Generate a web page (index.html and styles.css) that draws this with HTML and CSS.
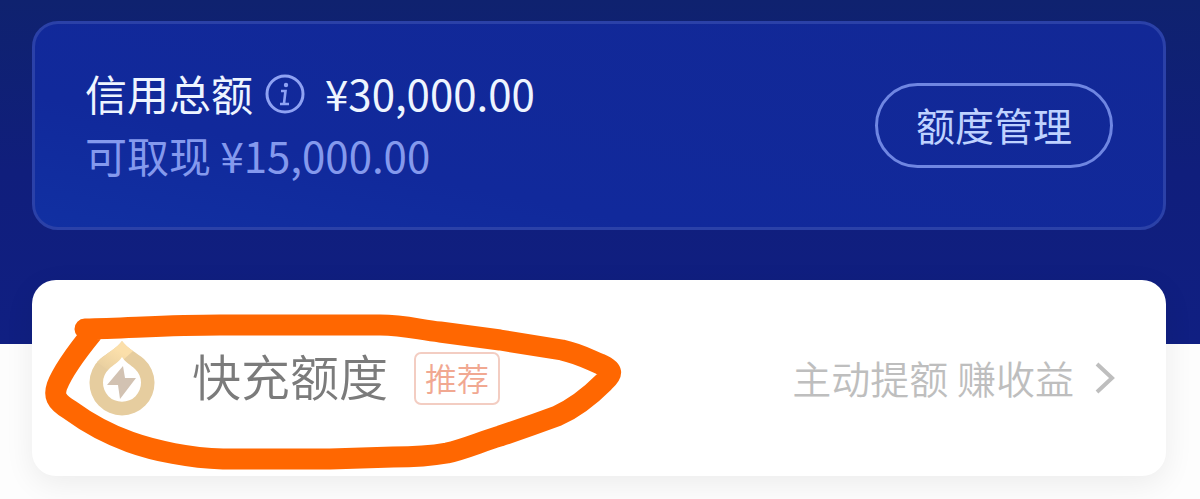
FILE: index.html
```
<!DOCTYPE html>
<html lang="zh-CN">
<head>
<meta charset="utf-8">
<meta name="viewport" content="width=device-width, initial-scale=1">
<title>信用总额</title>
<link rel="stylesheet" href="styles.css">
</head>
<body>
<main class="page">
  <section class="hero">
    <div class="credit-card">
      <div class="amounts">
        <div class="total">
          <span>信用总额</span>
          <svg class="info" viewBox="0 0 40 40" aria-hidden="true">
            <circle cx="20" cy="20" r="18" fill="none" stroke="currentColor" stroke-width="3"/>
            <circle cx="21" cy="11" r="2.200" fill="currentColor"/>
            <path d="M16 17h4.500l-1.500 12.500M15 30h9" fill="none" stroke="currentColor" stroke-width="2.600"/>
          </svg>
          <span>¥30,000.00</span>
        </div>
        <div class="cash">可取现 ¥15,000.00</div>
      </div>
      <button class="manage" type="button">额度管理</button>
    </div>
  </section>
  <section class="boost">
    <svg class="drop" viewBox="0 0 66 76" aria-hidden="true">
      <defs>
        <linearGradient id="drop-light" x1="0.800" y1="0" x2="0.100" y2="1">
          <stop offset="0.300" stop-color="#fbdfaa"/>
          <stop offset="1" stop-color="#e6cd9f"/>
        </linearGradient>
      </defs>
      <path d="M33 1C38 8 48 13 55 19A32.500 32.500 0 1 1 11 19C18 13 28 8 33 1Z" fill="#e6cd9f"/>
      <path d="M33 1C36 5 40 8 44 11L34 20L20 31L8 22C18 13 28 8 33 1Z" fill="url(#drop-light)"/>
      <path d="M33 17C36 22 42 25 46 29A19 19 0 1 1 20 29C24 25 30 22 33 17Z" fill="#fff"/>
      <path d="M34 26L18 45H29L31 59L47 38H36Z" fill="#d2c2b2"/>
    </svg>
    <h2 class="boost-title">快充额度</h2>
    <span class="tag">推荐</span>
    <a class="boost-link" href="#boost">
      <span class="boost-note">主动提额 赚收益</span>
      <svg class="chevron" viewBox="0 0 20 32" aria-hidden="true">
        <path d="M2 2L17 16L2 30" fill="none" stroke="currentColor" stroke-width="4"/>
      </svg>
    </a>
    <svg class="marker" viewBox="32 280 600 200" aria-hidden="true">
      <path d="M85 329C130 328 170 325 220 325H380C405 325 420 330 440 332L500 340L562 350C580 354 590 360 600 364C614 370 613 374 604 382C590 396 575 408 557 416C530 426 515 431 500 436C480 442 465 449 447 453C425 457 405 457 393 457L330 459H223C190 458 155 451 130 442C105 433 85 421 70 410C55 401 54 395 57 386C62 373 75 354 93 332"/>
    </svg>
  </section>
</main>
</body>
</html>
```
FILE: styles.css
```
* {
  box-sizing: border-box;
}

body {
  margin: 0;
  background: #fdfdfd;
  font-family: "Noto Sans CJK SC", sans-serif;
}

.page {
  padding-bottom: 24px;
}

.hero {
  padding: 21px 34px 114px 32px;
  background: linear-gradient(#0f226f, #101e7c 50%, #101f82);
}

.credit-card {
  display: flex;
  align-items: center;
  justify-content: space-between;
  padding: 38px 50px;
  border: 3px solid #2b41a8;
  border-radius: 26px;
  background: linear-gradient(12deg, #1130a2, #11299b 30%, #122896);
}

.amounts {
  padding-bottom: 3px;
  font-size: 42px;
  line-height: 62px;
}

.total {
  display: flex;
  align-items: center;
  color: #eef5ff;
}

.info {
  width: 40px;
  height: 40px;
  margin: 2px 20px 0 12px;
  color: #8fa2f3;
}

.cash {
  color: #8499ed;
}

.manage {
  padding: 9px 38px 11px;
  border: 3px solid #6f86e2;
  border-radius: 43px;
  background: transparent;
  color: #bfd2ff;
  font-family: inherit;
  font-size: 39px;
  line-height: 59px;
}

.boost {
  position: relative;
  display: flex;
  align-items: center;
  margin: -64px 34px 0 32px;
  padding: 60px 51px 60px 57px;
  border-radius: 24px;
  background: #fff;
  box-shadow: 0 8px 30px rgba(0, 0, 0, 0.07);
}

.drop {
  width: 66px;
  height: 76px;
}

.boost-title {
  margin: 0 0 0 37px;
  padding-bottom: 6px;
  color: #7b7b7b;
  font-size: 49px;
  font-weight: 350;
  line-height: 70px;
}

.tag {
  margin-left: 26px;
  padding: 0 9px 2px;
  border: 2px solid #f3cdc2;
  border-radius: 7px;
  color: #f1a891;
  font-size: 32px;
  font-weight: 350;
  line-height: 47px;
}

.boost-link {
  display: flex;
  align-items: center;
  gap: 21px;
  margin-left: auto;
  color: #bebebe;
  font-size: 39px;
  font-weight: 350;
  line-height: 60px;
  text-decoration: none;
}

.boost-note {
  padding-bottom: 2px;
}

.chevron {
  width: 20px;
  height: 32px;
}

.marker {
  position: absolute;
  top: 0;
  left: 0;
  width: 600px;
  height: 200px;
  fill: none;
  stroke: #ff6701;
  stroke-width: 21px;
  stroke-linecap: round;
  stroke-linejoin: round;
  pointer-events: none;
}
```
